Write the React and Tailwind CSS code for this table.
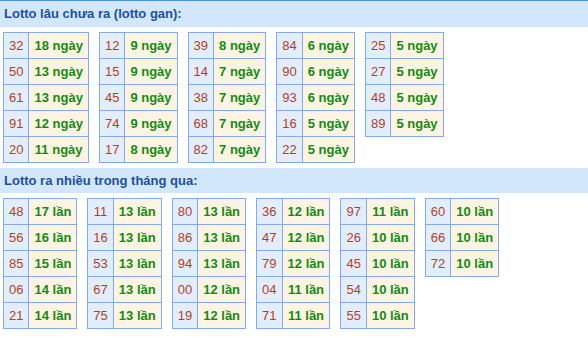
const ganTables = [
  [['32', 18], ['50', 13], ['61', 13], ['91', 12], ['20', 11]],
  [['12', 9], ['15', 9], ['45', 9], ['74', 9], ['17', 8]],
  [['39', 8], ['14', 7], ['38', 7], ['68', 7], ['82', 7]],
  [['84', 6], ['90', 6], ['93', 6], ['16', 5], ['22', 5]],
  [['25', 5], ['27', 5], ['48', 5], ['89', 5]],
];

const nhieuTables = [
  [['48', 17], ['56', 16], ['85', 15], ['06', 14], ['21', 14]],
  [['11', 13], ['16', 13], ['53', 13], ['67', 13], ['75', 13]],
  [['80', 13], ['86', 13], ['94', 13], ['00', 12], ['19', 12]],
  [['36', 12], ['47', 12], ['79', 12], ['04', 11], ['71', 11]],
  [['97', 11], ['26', 10], ['45', 10], ['54', 10], ['55', 10]],
  [['60', 10], ['66', 10], ['72', 10]],
];

const Header = ({ children, top }) => (
  <div
    className={`flex items-center px-[4px] bg-[#d3e7fc] text-[13px] font-bold text-[#1d4f9f] ${
      top ? 'h-[27px] border-t border-[#4d93e6]' : 'h-[25px] mt-[5px]'
    }`}
  >
    {children}
  </div>
);

const LotoTable = ({ rows, unit }) => (
  <div className="grid grid-cols-[auto_auto] self-start border-t border-l border-[#82aaf2]">
    {rows.map(([num, count]) => (
      <div key={num} className="contents">
        <div className="h-[26px] flex items-center justify-center px-[5px] bg-[#e2eefd] border-r border-b border-[#82aaf2] text-[#b63e1e]">
          {num}
        </div>
        <div className="h-[26px] flex items-center justify-center px-[5px] bg-[#fef4e3] border-r border-b border-[#82aaf2] font-bold text-[#148a14]">
          {count} {unit}
        </div>
      </div>
    ))}
  </div>
);

export default function App() {
  return (
    <div className="w-[588px] h-[338px] bg-white overflow-hidden text-[13px] font-['Liberation_Sans',Arial,sans-serif]">
      <Header top>Lotto lâu chưa ra (lotto gan):</Header>
      <div className="flex items-start gap-[10px] pl-[3px] mt-[5px]">
        {ganTables.map((rows, i) => (
          <LotoTable key={i} rows={rows} unit="ngày" />
        ))}
      </div>

      <Header>Lotto ra nhiều trong tháng qua:</Header>
      <div className="flex items-start gap-[10px] pl-[3px] mt-[5px]">
        {nhieuTables.map((rows, i) => (
          <LotoTable key={i} rows={rows} unit="lần" />
        ))}
      </div>
    </div>
  );
}
